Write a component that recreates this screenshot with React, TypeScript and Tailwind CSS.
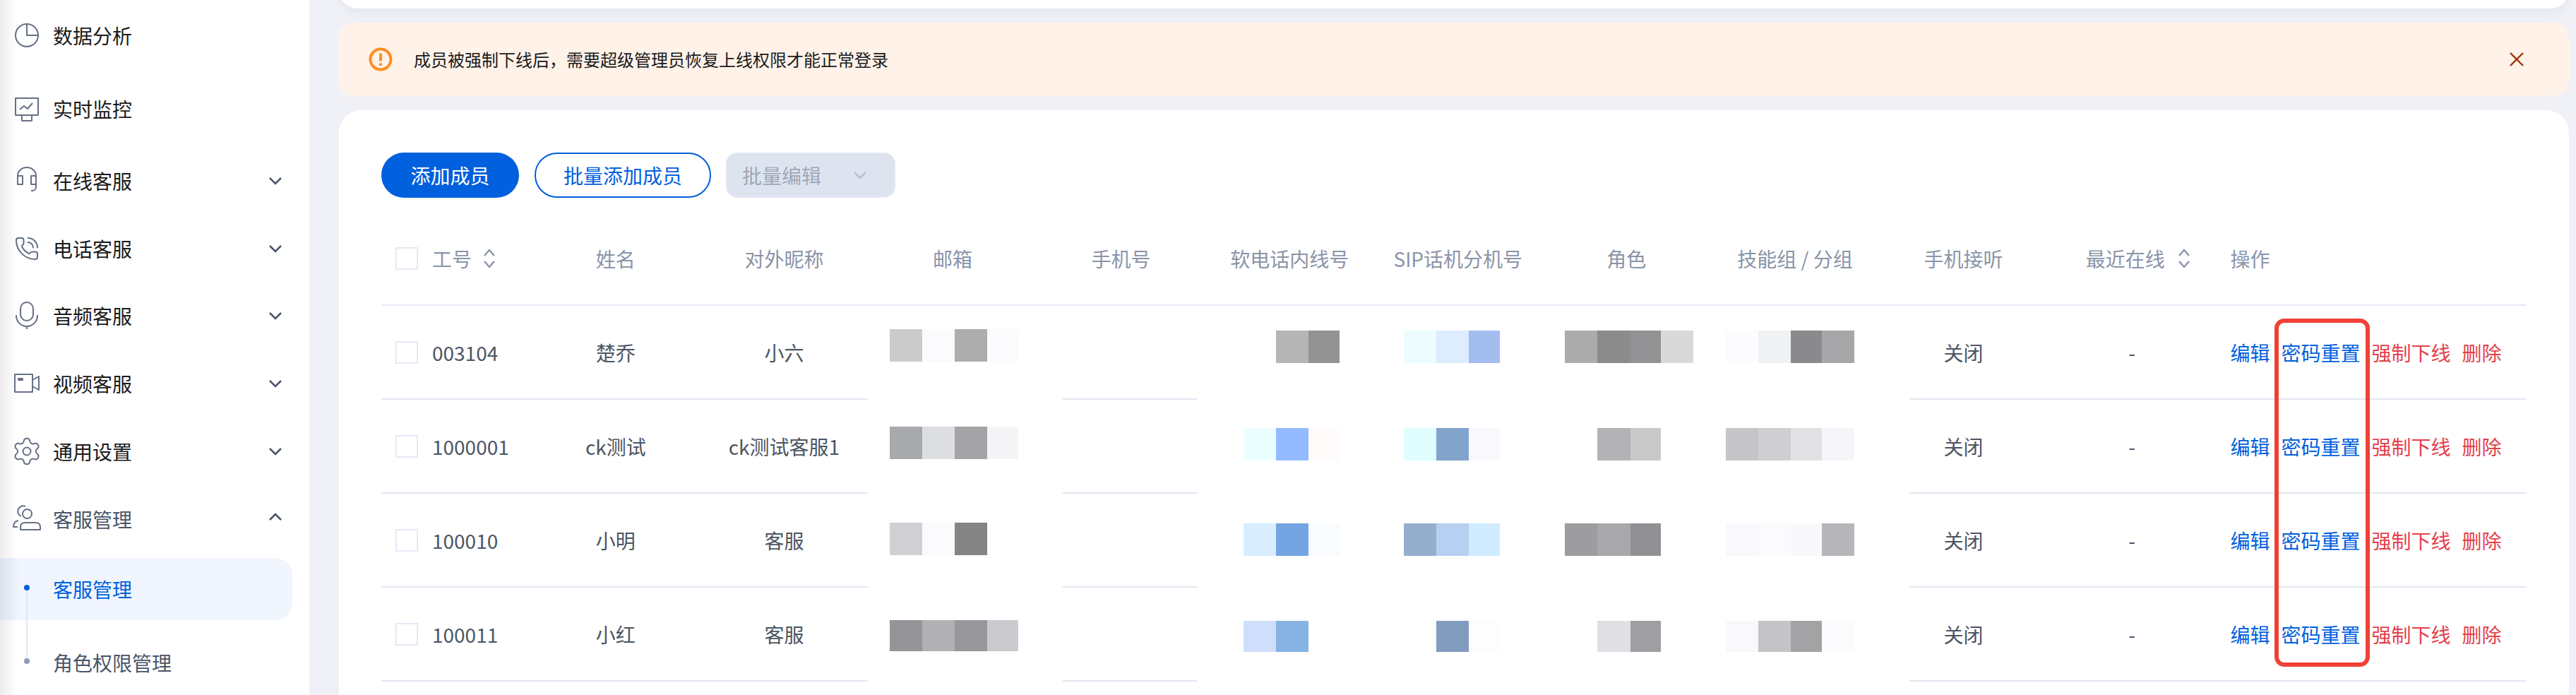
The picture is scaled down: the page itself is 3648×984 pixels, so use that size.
import { PhoneCall, Settings } from "lucide-react";
import type { ReactNode } from "react";

const iconClass = "stroke-[#667085] fill-none";

function Box({ children }: { children: ReactNode }) {
  return (
    <svg width="40" height="40" viewBox="0 0 40 40" className={iconClass} strokeWidth="2" strokeLinejoin="round">
      {children}
    </svg>
  );
}

const PieIcon = () => (
  <Box>
    <circle cx="20" cy="20" r="16" />
    <path d="M20 4V20H36" />
  </Box>
);
const MonitorIcon = () => (
  <Box>
    <rect x="4" y="5" width="32" height="24" />
    <path d="M13 29V37H27V29" />
    <path d="M10 21L16 16L21 20L28 12" />
  </Box>
);
const HeadsetIcon = () => (
  <Box>
    <path d="M7 13a13 12 0 0 1 26 0" />
    <rect x="7" y="13" width="7" height="12" />
    <rect x="26" y="13" width="7" height="12" />
    <path d="M33 25v4a5 5 0 0 1-5 5h-2" />
  </Box>
);
const MicIcon = () => (
  <Box>
    <rect x="11" y="1" width="18" height="26" rx="9" />
    <path d="M5 19v1a15 15 0 0 0 30 0v-1" />
    <path d="M20 35v4" />
  </Box>
);
const VideoIcon = () => (
  <Box>
    <rect x="3" y="7" width="25" height="25" />
    <path d="M28 15L37 10V29L28 24" />
    <rect x="8" y="13" width="6" height="2" className="fill-[#667085]" />
  </Box>
);
const UsersIcon = () => (
  <Box>
    <circle cx="20.5" cy="12.5" r="6.5" />
    <path d="M11 35V31C11 27 14 25 18 25H32C36 25 39 27 39 31V35Z" />
    <path d="M18 2A7 7 0 0 0 12 16" />
    <path d="M8 22C3 23 1 26 1 31H7" />
  </Box>
);

function Chevron({ up = false, color = "#4a5568" }: { up?: boolean; color?: string }) {
  return (
    <svg width="20" height="20" viewBox="0 0 20 20" fill="none" stroke={color} strokeWidth="2.6">
      <path d={up ? "M2 14L10 6L18 14" : "M2 6L10 14L18 6"} />
    </svg>
  );
}

function SortIcon() {
  return (
    <svg width="18" height="28" viewBox="0 0 18 28" fill="none" stroke="#8a94a8" strokeWidth="2.4" className="shrink-0">
      <path d="M2 10L9 2L16 10" />
      <path d="M2 18L9 26L16 18" />
    </svg>
  );
}

const menu: { label: string; icon: ReactNode; h: string; chevron: boolean }[] = [
  { label: "数据分析", icon: <PieIcon />, h: "h-[100px]", chevron: false },
  { label: "实时监控", icon: <MonitorIcon />, h: "h-[108px]", chevron: false },
  { label: "在线客服", icon: <HeadsetIcon />, h: "h-[96px]", chevron: true },
  { label: "电话客服", icon: <PhoneCall size={36} strokeWidth={1.35} color="#667085" />, h: "h-[95px]", chevron: true },
  { label: "音频客服", icon: <MicIcon />, h: "h-[96px]", chevron: true },
  { label: "视频客服", icon: <VideoIcon />, h: "h-[96px]", chevron: true },
  { label: "通用设置", icon: <Settings size={44} strokeWidth={1.1} color="#667085" className="shrink-0" />, h: "h-[96px]", chevron: true },
];

function Sidebar() {
  return (
    <aside className="w-[438px] shrink-0 h-full flex flex-col bg-linear-to-r from-[#ececec] to-white to-[24px] text-[28px] leading-10 text-[#1a1a1a]">
      {menu.map((m) => (
        <div key={m.label} className={`${m.h} flex items-center pl-[18px] pr-[38px]`}>
          <span className="w-10 h-10 flex items-center justify-center shrink-0">{m.icon}</span>
          <span className="ml-[17px]">{m.label}</span>
          {m.chevron && (
            <span className="ml-auto">
              <Chevron />
            </span>
          )}
        </div>
      ))}
      <div className="h-[96px] flex items-center pl-[18px] pr-[38px] text-[#4a5568]">
        <span className="w-10 h-10 flex items-center justify-center shrink-0">
          <UsersIcon />
        </span>
        <span className="ml-[17px]">客服管理</span>
        <span className="ml-auto -mt-[6px]">
          <Chevron up />
        </span>
      </div>
      <div className="relative mt-[7px]">
        <div className="h-[88px] w-[414px] rounded-r-[24px] bg-linear-to-r from-[#dde3ee] to-[#f0f5fe] to-[28px] flex items-center pl-[75px] text-[#0060dd]">
          客服管理
        </div>
        <div className="pl-[75px] pt-[40px] text-[#4a5568]">角色权限管理</div>
        <span className="absolute left-[37px] top-[42px] w-[2px] h-[104px] bg-[#e2e8f2]" />
        <span className="absolute left-[34px] top-[38px] w-2 h-2 rounded-full bg-[#0060dd]" />
        <span className="absolute left-[34px] top-[142px] w-2 h-2 rounded-full bg-[#8f9bb3]" />
      </div>
    </aside>
  );
}

type MosaicCol = { pad: string; widths: string[]; colors: string[][] };

const email: MosaicCol = {
  pad: "ml-[30px]",
  widths: ["w-[46px]", "w-[46px]", "w-[46px]", "w-[44px]"],
  colors: [
    ["#cbcbcc", "#fbfbfd", "#adadae", "#fcfcfe"],
    ["#a8a9ad", "#dddee1", "#a4a4a6", "#f5f5f7"],
    ["#d0d0d4", "#fbfbfd", "#848485", "#ffffff"],
    ["#959499", "#b1b0b4", "#98979b", "#cbcbcf"],
  ],
};
const soft: MosaicCol = {
  pad: "ml-[54px]",
  widths: ["w-[46px]", "w-[46px]", "w-[44px]"],
  colors: [
    ["#ffffff", "#b5b5b6", "#939393"],
    ["#ecfdfe", "#93bbff", "#fffbfb"],
    ["#d8eeff", "#74a4e2", "#f9fcff"],
    ["#cfdefa", "#86b3e4", "#ffffff"],
  ],
};
const sip: MosaicCol = {
  pad: "ml-[43px]",
  widths: ["w-[46px]", "w-[46px]", "w-[44px]"],
  colors: [
    ["#ecfcff", "#deecff", "#a3bdef"],
    ["#e0feff", "#82a3cb", "#f9f9fd"],
    ["#95aecd", "#b6cff2", "#cfebff"],
    ["#ffffff", "#819cbe", "#fefdfd"],
  ],
};
const role: MosaicCol = {
  pad: "ml-[32px]",
  widths: ["w-[46px]", "w-[47px]", "w-[43px]", "w-[46px]"],
  colors: [
    ["#acacad", "#8b8b8c", "#929294", "#d9d9d9"],
    ["#ffffff", "#b3b3b5", "#c9c9ca", "#ffffff"],
    ["#9d9d9f", "#a9a9ac", "#919094", "#ffffff"],
    ["#ffffff", "#e0e0e4", "#9f9ea2", "#ffffff"],
  ],
};
const skill: MosaicCol = {
  pad: "ml-[21px]",
  widths: ["w-[46px]", "w-[46px]", "w-[44px]", "w-[46px]"],
  colors: [
    ["#fcfcfe", "#f0f1f3", "#8a8a8c", "#a7a7a9"],
    ["#c6c6c8", "#cfcfd1", "#e1e1e3", "#f6f6fa"],
    ["#f9f9fd", "#fbfbfd", "#f8f8fa", "#b6b6ba"],
    ["#f9f9fd", "#c4c4c8", "#a3a3a5", "#fcfcfe"],
  ],
};

const emailTop = ["mt-[33px]", "mt-[38px]", "mt-[41px]", "mt-[46px]"];
const otherTop = ["mt-[35px]", "mt-[40px]", "mt-[42px]", "mt-[47px]"];
const mosaicH = ["h-[46px]", "h-[46px]", "h-[46px]", "h-[44px]"];

function Mosaic({ col, row, tops }: { col: MosaicCol; row: number; tops: string[] }) {
  return (
    <div className={`self-start flex ${col.pad} ${tops[row]} ${mosaicH[row]}`}>
      {col.colors[row].map((c, i) => (
        <span key={i} className={`${col.widths[i]} h-full`} style={{ backgroundColor: c }} />
      ))}
    </div>
  );
}

const people = [
  { id: "003104", name: "楚乔", nick: "小六" },
  { id: "1000001", name: "ck测试", nick: "ck测试客服1" },
  { id: "100010", name: "小明", nick: "客服" },
  { id: "100011", name: "小红", nick: "客服" },
];

const gridCols = "grid grid-cols-[212.5px_repeat(10,238.6px)_1fr]";
const lineColor = "bg-[#e1e7f2]";

function Checkbox() {
  return <span className="w-8 h-8 border-2 border-[#e4e9f5] bg-white shrink-0" />;
}

function Row({ p, row }: { p: (typeof people)[number]; row: number }) {
  return (
    <>
      <div className={`${gridCols} h-[131px] items-center text-[28px] text-[#4b5563]`}>
        <div className="flex items-center pl-5 gap-5">
          <Checkbox />
          <span>{p.id}</span>
        </div>
        <div className="text-center">{p.name}</div>
        <div className="text-center">{p.nick}</div>
        <Mosaic col={email} row={row} tops={emailTop} />
        <div />
        <Mosaic col={soft} row={row} tops={otherTop} />
        <Mosaic col={sip} row={row} tops={otherTop} />
        <Mosaic col={role} row={row} tops={otherTop} />
        <Mosaic col={skill} row={row} tops={otherTop} />
        <div className="text-center">关闭</div>
        <div className="text-center">-</div>
        <div className="flex gap-4 pl-5 whitespace-nowrap">
          <span className="text-[#0060dd]">编辑</span>
          <span className="text-[#0060dd]">密码重置</span>
          <span className="text-[#e5404a]">强制下线</span>
          <span className="text-[#e5404a]">删除</span>
        </div>
      </div>
      <div className="flex h-[2px]">
        <div className={`w-[689px] ${lineColor}`} />
        <div className="w-[276px]" />
        <div className={`w-[190px] ${lineColor}`} />
        <div className="w-[1009px]" />
        <div className={`flex-1 ${lineColor}`} />
      </div>
    </>
  );
}

function HeaderRow() {
  const center = ["姓名", "对外昵称", "邮箱", "手机号", "软电话内线号", "SIP话机分机号", "角色", "技能组 / 分组", "手机接听"];
  return (
    <div className={`${gridCols} h-[130px] mt-[21px] items-center text-[28px] text-[#8a94a8] border-b-2 border-[#e4e9f5] box-content`}>
      <div className="flex items-center pl-5 gap-5">
        <Checkbox />
        <span>工号</span>
        <span className="-ml-1">
          <SortIcon />
        </span>
      </div>
      {center.map((t) => (
        <div key={t} className="text-center whitespace-nowrap">
          {t}
        </div>
      ))}
      <div className="flex items-center gap-[18px] pl-[54px]">
        <span className="whitespace-nowrap">最近在线</span>
        <SortIcon />
      </div>
      <div className="pl-5">操作</div>
    </div>
  );
}

export default function App() {
  return (
    <div className="w-[3648px] h-[984px] overflow-hidden flex bg-[#f0f1f6] font-['Noto_Sans_CJK_SC','Noto_Sans',sans-serif]">
      <Sidebar />
      <main className="flex-1 min-w-0 h-full flex flex-col pl-[42px] pr-[10px]">
        <div className="h-[52px] -mt-[40px] shrink-0 bg-white rounded-[32px] shadow-[0_4px_12px_rgba(200,205,220,0.35)]" />
        <div className="h-[104px] mt-5 shrink-0 rounded-[20px] bg-[#fff2e9] flex items-center pl-[42px] pr-[64px]">
          <svg width="34" height="34" viewBox="0 0 34 34" fill="none" className="shrink-0">
            <circle cx="17" cy="17" r="14.5" stroke="#ff8f1f" strokeWidth="4" />
            <path d="M17 8.5V19.5" stroke="#ff8f1f" strokeWidth="4" />
            <path d="M17 22.5V26" stroke="#ff8f1f" strokeWidth="4" />
          </svg>
          <span className="ml-[30px] text-[24px] text-[#1a1a1a]">成员被强制下线后，需要超级管理员恢复上线权限才能正常登录</span>
          <svg width="20" height="20" viewBox="0 0 20 20" fill="none" stroke="#993608" strokeWidth="2.4" className="ml-auto">
            <path d="M1 1L19 19M19 1L1 19" />
          </svg>
        </div>
        <section className="flex-1 mt-5 bg-white rounded-t-[32px] pt-[60px] pl-[60px] pr-[60px]">
          <div className="flex items-stretch h-16 text-[28px]">
            <button className="w-[195px] rounded-full bg-[#0060dd] text-white">添加成员</button>
            <button className="w-[250px] ml-[22px] rounded-full border-2 border-[#0060dd] text-[#0060dd] bg-white">批量添加成员</button>
            <div className="w-[240px] ml-[21px] rounded-[16px] bg-[#dde4ef] border-2 border-[#e2e8f2] text-[#a0a8b8] flex items-center pl-[21px]">
              <span>批量编辑</span>
              <span className="ml-[45px]">
                <Chevron color="#b9c0cf" />
              </span>
            </div>
          </div>
          <HeaderRow />
          <div className="relative">
            {people.map((p, i) => (
              <Row key={p.id} p={p} row={i} />
            ))}
            <div className="absolute left-[2681px] top-[18px] w-[135px] h-[493px] border-[6px] border-[#ef4135] rounded-[14px]" />
          </div>
        </section>
      </main>
    </div>
  );
}
